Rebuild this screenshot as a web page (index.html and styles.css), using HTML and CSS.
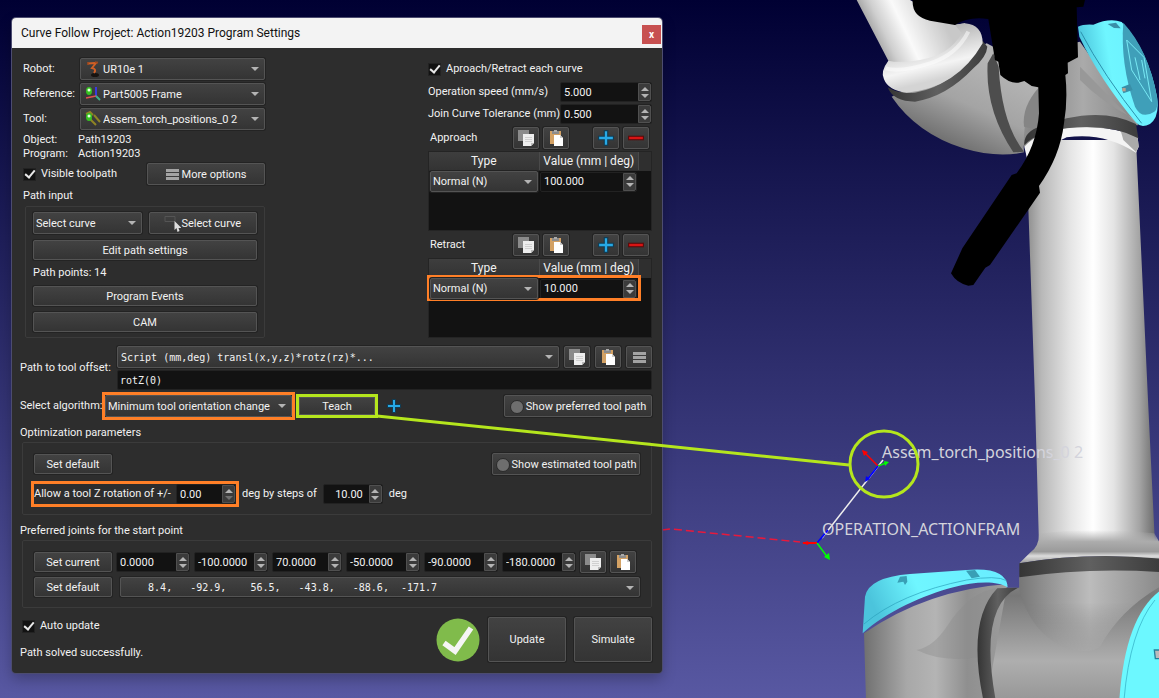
FILE: index.html
```
<!DOCTYPE html>
<html lang="en">
<head>
  <meta charset="UTF-8">
  <meta name="viewport" content="width=device-width, initial-scale=1.0">
  <title>Curve Follow Project</title>
  <link rel="stylesheet" href="styles.css">
</head>
<body>
  <!-- shared icons -->
  <svg class="defs" width="0" height="0" aria-hidden="true">
    <symbol id="i-copy" viewBox="0 0 16 16">
      <path d="M0 0h11v11H0z" fill="#8b8b8b"/>
      <path d="M5 4h11v9l-3 3H5z" fill="#eee"/>
      <path d="M7 7.5h7M7 9.5h7M7 11.5h7" stroke="#d0d0d0"/>
      <path d="M13 16v-3h3z" fill="#bbb"/>
    </symbol>
    <symbol id="i-paste" viewBox="0 0 16 16">
      <path d="M2 1h11v13H2z" fill="#d3a164"/>
      <path d="M4 1h7v3H4z" fill="#8c8c8c"/>
      <path d="M6 0h3v2H6z" fill="#aaa"/>
      <path d="M6 5h6l3 3v8H6z" fill="#fff"/>
      <path d="M12 5v3h3z" fill="#ccc"/>
    </symbol>
    <symbol id="i-plus" viewBox="0 0 14 14">
      <path d="M7 0v14M0 7h14" stroke="#123c52" stroke-width="4"/>
      <path d="M7 1v12M1 7h12" stroke="#27a9e6" stroke-width="2"/>
    </symbol>
    <symbol id="i-minus" viewBox="0 0 14 14">
      <path d="M0 7h14" stroke="#5a0d0d" stroke-width="4"/>
      <path d="M1 7h12" stroke="#d81414" stroke-width="2"/>
    </symbol>
    <symbol id="i-menu" viewBox="0 0 13 11">
      <path d="M0 1.5h13M0 5.5h13M0 9.5h13" stroke="#a3a3a3" stroke-width="3"/>
    </symbol>
  </svg>

  <!-- 3D view -->
  <svg class="scene" viewBox="0 0 1159 698" preserveAspectRatio="xMinYMin slice">
    <defs>
      <linearGradient id="column">
        <stop offset="0" stop-color="#8a8a8a"/>
        <stop offset=".12" stop-color="#b8b8b8"/>
        <stop offset=".35" stop-color="#e6e6e6"/>
        <stop offset=".52" stop-color="#fff"/>
        <stop offset=".68" stop-color="#e4e4e4"/>
        <stop offset=".88" stop-color="#a4a4a4"/>
        <stop offset="1" stop-color="#6c6c6c"/>
      </linearGradient>
      <linearGradient id="arm" gradientUnits="userSpaceOnUse" x1="80" y1="120" x2="290" y2="20">
        <stop offset="0" stop-color="#8c8c8c"/>
        <stop offset=".25" stop-color="#cfcfcf"/>
        <stop offset=".5" stop-color="#fafafa"/>
        <stop offset="1" stop-color="#c8c8c8"/>
      </linearGradient>
      <linearGradient id="flare" gradientUnits="userSpaceOnUse" x1="290" y1="60" x2="330" y2="230">
        <stop offset="0" stop-color="#a5a5a5"/>
        <stop offset=".4" stop-color="#cfcfcf"/>
        <stop offset=".75" stop-color="#f4f4f4"/>
        <stop offset="1" stop-color="#d4d4d4"/>
      </linearGradient>
      <linearGradient id="elbow" gradientUnits="userSpaceOnUse" x1="450" y1="180" x2="330" y2="450">
        <stop offset="0" stop-color="#b5b5b5"/>
        <stop offset=".5" stop-color="#a4a4a4"/>
        <stop offset="1" stop-color="#6a6a6a"/>
      </linearGradient>
      <linearGradient id="wrist" x1="0" y1="0" x2="1" y2="0">
        <stop offset="0" stop-color="#a8a8a8"/>
        <stop offset=".25" stop-color="#848484"/>
        <stop offset=".6" stop-color="#aaa"/>
        <stop offset="1" stop-color="#858585"/>
      </linearGradient>
      <linearGradient id="cap" x1="0" y1=".2" x2="1" y2="0">
        <stop offset="0" stop-color="#4bc4dc"/>
        <stop offset=".35" stop-color="#6ff6ff"/>
        <stop offset="1" stop-color="#68ecff"/>
      </linearGradient>
      <linearGradient id="ring">
        <stop offset="0" stop-color="#353535"/>
        <stop offset=".5" stop-color="#606060"/>
        <stop offset="1" stop-color="#3c3c3c"/>
      </linearGradient>
      <linearGradient id="collar" x1="0" y1="0" x2="0" y2="1">
        <stop offset="0" stop-color="#b4b4b4" stop-opacity="0"/>
        <stop offset=".35" stop-color="#acacac"/>
        <stop offset=".65" stop-color="#9a9a9a"/>
        <stop offset=".78" stop-color="#dcdcdc"/>
        <stop offset="1" stop-color="#999"/>
      </linearGradient>
      <linearGradient id="base" x1="0" y1="0" x2="0" y2="1">
        <stop offset="0" stop-color="#8c8c8c"/>
        <stop offset=".2" stop-color="#777"/>
        <stop offset=".7" stop-color="#aeaeae"/>
        <stop offset="1" stop-color="#979797"/>
      </linearGradient>
      <linearGradient id="neck">
        <stop offset="0" stop-color="#777"/>
        <stop offset=".5" stop-color="#bcbcbc"/>
        <stop offset="1" stop-color="#8a8a8a"/>
      </linearGradient>
      <linearGradient id="neck-fade" x1="0" y1="0" x2="0" y2="1">
        <stop offset=".4" stop-color="#fff"/>
        <stop offset="1" stop-color="#000"/>
      </linearGradient>
      <mask id="neck-mask">
        <path d="M658 500H1080V770H658Z" fill="url(#neck-fade)"/>
      </mask>
      <linearGradient id="shoulder">
        <stop offset="0" stop-color="#707070"/>
        <stop offset=".3" stop-color="#a8a8a8"/>
        <stop offset=".5" stop-color="#b4b4b4"/>
        <stop offset=".72" stop-color="#8f8f8f"/>
        <stop offset="1" stop-color="#9c9c9c"/>
      </linearGradient>
    </defs>

    <path d="M1026 140H1136L1148 400L1155 545H1039L1035 400Z" fill="url(#column)"/>

    <g transform="translate(840 0) scale(.33333)">
      <path d="M480 170L720 125L895 375L680 400L553 440L480 330Z" fill="url(#wrist)"/>
      <path d="M720 240Q790 310 880 355L895 378L720 200Z" fill="#989898"/>
      <path d="M155 290Q230 400 370 445Q470 475 552 457Q545 340 597 265L460 140L440 130Z" fill="url(#elbow)"/>
      <path d="M552 380Q545 320 597 262V390Z" fill="#858585"/>
      <path d="M443 190Q435 330 520 457L552 455Q485 370 476 200L460 160Z" fill="#4d4d4d"/>
      <path d="M143 262Q175 282 225 278Q350 255 428 122L442 140Q440 170 400 205Q320 290 225 305Q160 305 143 262Z" fill="url(#ring)"/>
      <path d="M50 0L145 182L180 240L380 140L375 70L345 74L210 0Z" fill="url(#arm)"/>
      <path d="M145 182Q120 215 132 238Q145 272 200 278Q350 265 428 130Q428 75 375 70L345 74L365 100Q330 165 240 180Q180 190 145 182Z" fill="url(#flare)"/>
      <path d="M137 205Q180 218 270 190Q350 165 385 95" fill="none" stroke="#fff" stroke-width="12" opacity=".5"/>
      <path d="M553 440Q600 388 690 383Q820 375 893 412L896 440L888 458Q790 395 680 412L560 470Z" fill="#f4f4f4"/>
      <path d="M840 385Q880 395 893 412L896 440L888 456L850 420Z" fill="#aaa"/>
      <path d="M553 436Q550 400 590 383L680 355Q800 328 888 372L895 415Q810 370 680 385Q590 395 553 436Z" fill="url(#ring)"/>
      <path d="M714 80Q730 72 760 74Q810 52 845 66Q925 150 951 290Q960 350 930 372Q905 385 890 370Q780 240 718 110Z" fill="url(#cap)"/>
      <path d="M850 68Q925 150 951 290Q956 325 943 335Q905 360 885 320Q840 190 850 68Z" fill="#3f9fb9"/>
      <path d="M722 95Q790 225 905 370" fill="none" stroke="#2b91ad" stroke-width="3"/>
      <path d="M860 120L875 210L935 305L912 172ZM885 172Q895 215 900 240M905 180L915 235" fill="none" stroke="#77e9f4" stroke-width="3"/>
      <path d="M803 72L828 68L842 85L822 84Z" fill="#398fa8"/>
      <path d="M845 262L870 252L878 270L850 280Z" fill="#398fa8"/>
      <path d="M847 264h10v10h-10z" fill="#b8a08e"/>
      <path d="M218 0Q215 50 270 62L345 75Q385 48 445 57L465 180L475 185L481 225Q510 252 535 248L553 243L575 258L595 262L597 340Q590 440 530 520L515 525L367 745L333 820Q350 850 385 857L400 855L436 803L450 795L600 578L597 558Q660 470 672 370Q684 300 676 225L684 220L683 188L714 172L710 22L730 20L735 0Z"/>
    </g>

    <g transform="translate(800 400) scale(.33333)">
      <path d="M717 400Q718 440 690 458L658 490Q860 455 1080 478V430L1063 400Q890 380 717 400Z" fill="url(#collar)"/>
      <path d="M658 530Q860 500 1080 512V900H560L590 563H658Z" fill="url(#base)"/>
      <path d="M658 530Q860 500 1080 512V560Q960 630 900 740Q860 770 780 735Q690 690 658 570Z" fill="url(#neck)" mask="url(#neck-mask)"/>
      <path d="M658 490Q860 455 1080 476V516Q860 502 658 532Z" fill="url(#ring)"/>
      <path d="M192 700Q380 570 622 552L560 900H198Z" fill="url(#shoulder)"/>
      <path d="M600 563Q510 570 440 680Q400 740 350 750Q430 790 540 770Z" fill="#8c8c8c" opacity=".4"/>
      <path d="M592 565L655 563Q535 620 587 900H550Q500 660 592 565Z" fill="url(#ring)"/>
      <path d="M188 700L195 590Q205 532 330 522L500 510Q620 500 623 562C590 540 520 545 460 562C370 585 260 635 188 700Z" fill="url(#cap)"/>
      <path d="M192 672Q300 580 500 540Q590 525 620 542" fill="none" stroke="#289eba" stroke-width="2"/>
      <path d="M292 548L300 530L320 528L322 545L315 555L310 545Z" fill="#399fb5"/>
      <path d="M498 512L525 510L540 530L515 535Z" fill="#399fb5"/>
      <path d="M1080 572Q975 650 958 900H1080Z" fill="#6cf8ff"/>
      <path d="M1065 600Q990 690 972 900" fill="none" stroke="#2fa8c0" stroke-width="2"/>
      <path d="M1063 750h17v26h-14z" fill="#bbb" stroke="#24809a" stroke-width="4"/>
    </g>

    <!-- tool path and frames -->
    <g fill="none">
      <path d="M662 530L671 529L800 542" stroke="#e8193c" stroke-width="1.5" stroke-dasharray="8 4"/>
      <path d="M883 460L822 538" stroke="#eee" stroke-width="1.5"/>
      <path d="M878 466L863 451" stroke="#f00" stroke-width="1.5"/>
      <path d="M878 466L886 463" stroke="#0e0" stroke-width="1.5"/>
      <path d="M878 466L867 480M817 543L828 530" stroke="#00f" stroke-width="1.8"/>
      <path d="M817 543H803" stroke="#f00" stroke-width="2"/>
      <path d="M817 543L828 558" stroke="#0f0" stroke-width="1.5"/>
    </g>
    <path d="M862 450l6 2-4 4zM802 543l6-2v4z" fill="#f00"/>
    <path d="M889 462l-5-1 1 5zM830 560l-1-7-5 4z" fill="#0f0"/>
    <path d="M865 482l1-6 4 3z" fill="#00f"/>
    <text x="882" y="458" class="scene-label">Assem_torch_positions_0 2</text>
    <text x="822" y="535" class="scene-label">OPERATION_ACTIONFRAM</text>
  </svg>

  <main class="dialog">
    <header class="titlebar">
      <h1>Curve Follow Project: Action19203 Program Settings</h1>
      <button class="close" aria-label="Close">x</button>
    </header>

    <div class="content">
      <div class="top">
        <section class="left">
          <div class="fields">
            <label for="robot">Robot:</label>
            <div class="combo">
              <svg class="combo-icon" viewBox="0 0 16 16">
                <ellipse cx="10" cy="14" rx="4" ry="2" fill="#171310"/>
                <path d="M3 2.5L11 2L7 7Q12 8 9 12" fill="none" stroke="#cf5f25" stroke-width="2"/>
                <path d="M3 4V1M10 1l3 1" fill="none" stroke="#a44a1d" stroke-width="1.5"/>
              </svg>
              <select id="robot" class="has-icon"><option>UR10e 1</option></select>
            </div>
            <label for="reference">Reference:</label>
            <div class="combo">
              <svg class="combo-icon" viewBox="0 0 16 16">
                <path d="M11 1V11" stroke="#3a3ae0" stroke-width="2"/>
                <path d="M11 10L1 12" stroke="#e05050" stroke-width="1.5"/>
                <path d="M11 10L15 14" stroke="#3fae8a" stroke-width="2"/>
                <ellipse cx="4" cy="5" rx="3" ry="4" fill="#36c321"/>
                <circle cx="4" cy="4" r="1.5" fill="#e9ffe4"/>
              </svg>
              <select id="reference" class="has-icon"><option>Part5005 Frame</option></select>
            </div>
            <label for="tool">Tool:</label>
            <div class="combo">
              <svg class="combo-icon" viewBox="0 0 16 16">
                <path d="M1 3L5 1L8 4M9 4L15 11M5 8L11 14" fill="none" stroke="#8f8424" stroke-width="2"/>
                <ellipse cx="4" cy="6" rx="3" ry="4" fill="#36c321"/>
                <circle cx="4" cy="5" r="1.5" fill="#e9ffe4"/>
              </svg>
              <select id="tool" class="has-icon"><option>Assem_torch_positions_0 2</option></select>
            </div>
          </div>
          <dl class="info">
            <dt>Object:</dt><dd>Path19203</dd>
            <dt>Program:</dt><dd>Action19203</dd>
          </dl>
          <div class="row between">
            <label class="check"><input type="checkbox" checked>Visible toolpath</label>
            <button class="btn more"><svg class="menu-icon"><use href="#i-menu"/></svg>More options</button>
          </div>
          <h2>Path input</h2>
          <div class="group path-input">
            <div class="pickers">
              <div class="combo">
                <select aria-label="Path type"><option>Select curve</option></select>
              </div>
              <button class="btn pick">
                <svg class="cursor-icon" viewBox="0 0 16 16">
                  <path d="M.5.5h10v5H.5z" fill="none" stroke="#555"/>
                  <path d="M10 5v9l2-2 1 4 2-1-1-3h3z" fill="#ddd"/>
                </svg>Select curve
              </button>
            </div>
            <button class="btn">Edit path settings</button>
            <p>Path points: 14</p>
            <button class="btn">Program Events</button>
            <button class="btn">CAM</button>
          </div>
        </section>

        <section class="right">
          <label class="check tall"><input type="checkbox" checked>Aproach/Retract each curve</label>
          <div class="row between">
            <label for="speed">Operation speed (mm/s)</label>
            <div class="spin wide"><input id="speed" type="text" value="5.000"><span class="arrows"></span></div>
          </div>
          <div class="row between">
            <label for="tolerance">Join Curve Tolerance (mm)</label>
            <div class="spin wide"><input id="tolerance" type="text" value="0.500"><span class="arrows"></span></div>
          </div>

          <div class="row tools">
            <h2>Approach</h2>
            <button class="btn icon" aria-label="Copy"><svg><use href="#i-copy"/></svg></button>
            <button class="btn icon" aria-label="Paste"><svg><use href="#i-paste"/></svg></button>
            <button class="btn icon add" aria-label="Add"><svg><use href="#i-plus"/></svg></button>
            <button class="btn icon" aria-label="Remove"><svg><use href="#i-minus"/></svg></button>
          </div>
          <div class="table-box">
            <table>
              <thead><tr><th>Type</th><th>Value (mm | deg)</th></tr></thead>
              <tbody>
                <tr>
                  <td><div class="combo"><select aria-label="Approach type"><option>Normal (N)</option></select></div></td>
                  <td><div class="spin"><input type="text" value="100.000" aria-label="Approach value"><span class="arrows"></span></div></td>
                </tr>
              </tbody>
            </table>
          </div>

          <div class="row tools">
            <h2>Retract</h2>
            <button class="btn icon" aria-label="Copy"><svg><use href="#i-copy"/></svg></button>
            <button class="btn icon" aria-label="Paste"><svg><use href="#i-paste"/></svg></button>
            <button class="btn icon add" aria-label="Add"><svg><use href="#i-plus"/></svg></button>
            <button class="btn icon" aria-label="Remove"><svg><use href="#i-minus"/></svg></button>
          </div>
          <div class="table-box">
            <table>
              <thead><tr><th>Type</th><th>Value (mm | deg)</th></tr></thead>
              <tbody>
                <tr class="mark">
                  <td><div class="combo"><select aria-label="Retract type"><option>Normal (N)</option></select></div></td>
                  <td><div class="spin"><input type="text" value="10.000" aria-label="Retract value"><span class="arrows"></span></div></td>
                </tr>
              </tbody>
            </table>
          </div>
        </section>
      </div>

      <section class="offset">
        <label for="offset">Path to tool offset:</label>
        <div class="row">
          <div class="combo grow">
            <select class="mono" aria-label="Offset format"><option>Script (mm,deg) transl(x,y,z)*rotz(rz)*...</option></select>
          </div>
          <button class="btn icon" aria-label="Copy"><svg><use href="#i-copy"/></svg></button>
          <button class="btn icon" aria-label="Paste"><svg><use href="#i-paste"/></svg></button>
          <button class="btn icon" aria-label="Menu"><svg class="menu-icon"><use href="#i-menu"/></svg></button>
        </div>
        <input id="offset" class="mono text-input" type="text" value="rotZ(0)">
      </section>

      <section class="row algorithm">
        <label for="algorithm">Select algorithm:</label>
        <div class="combo mark">
          <select id="algorithm"><option>Minimum tool orientation change</option></select>
        </div>
        <button class="btn teach">Teach</button>
        <button class="plain" aria-label="Add"><svg><use href="#i-plus"/></svg></button>
        <button class="btn toggle"><span class="lamp"></span>Show preferred tool path</button>
      </section>

      <h2 class="section-title">Optimization parameters</h2>
      <section class="group optimize">
        <div class="row between">
          <button class="btn fixed">Set default</button>
          <button class="btn toggle"><span class="lamp"></span>Show estimated tool path</button>
        </div>
        <div class="row rotation">
          <div class="row mark limit">
            <label for="rotation">Allow a tool Z rotation of +/-</label>
            <div class="spin small dim"><input id="rotation" type="text" value="0.00"><span class="arrows"></span></div>
          </div>
          <label for="steps">deg by steps of</label>
          <div class="spin small end"><input id="steps" type="text" value="10.00"><span class="arrows"></span></div>
          <span>deg</span>
        </div>
      </section>

      <h2 class="section-title">Preferred joints for the start point</h2>
      <section class="group joints">
        <div class="row">
          <button class="btn fixed">Set current</button>
          <div class="spin"><input type="text" value="0.0000" aria-label="Joint 1"><span class="arrows"></span></div>
          <div class="spin"><input type="text" value="-100.0000" aria-label="Joint 2"><span class="arrows"></span></div>
          <div class="spin short"><input type="text" value="70.0000" aria-label="Joint 3"><span class="arrows"></span></div>
          <div class="spin"><input type="text" value="-50.0000" aria-label="Joint 4"><span class="arrows"></span></div>
          <div class="spin"><input type="text" value="-90.0000" aria-label="Joint 5"><span class="arrows"></span></div>
          <div class="spin"><input type="text" value="-180.0000" aria-label="Joint 6"><span class="arrows"></span></div>
          <button class="btn icon" aria-label="Copy"><svg><use href="#i-copy"/></svg></button>
          <button class="btn icon" aria-label="Paste"><svg><use href="#i-paste"/></svg></button>
        </div>
        <div class="row solutions">
          <button class="btn fixed">Set default</button>
          <div class="combo grow">
            <select class="mono" aria-label="Joint solution"><option>&nbsp;&nbsp;&nbsp;&nbsp;8.4,&nbsp;&nbsp;&nbsp;-92.9,&nbsp;&nbsp;&nbsp;&nbsp;56.5,&nbsp;&nbsp;&nbsp;-43.8,&nbsp;&nbsp;&nbsp;-88.6,&nbsp;&nbsp;-171.7</option></select>
          </div>
        </div>
      </section>

      <footer class="row footer">
        <div class="status">
          <label class="check"><input type="checkbox" checked>Auto update</label>
          <p>Path solved successfully.</p>
        </div>
        <svg class="ok" viewBox="0 0 44 44">
          <circle cx="22" cy="22" r="21.5" fill="#80bb4b"/>
          <path d="M8 25L19 33L35 10" fill="none" stroke="#f5f5f5" stroke-width="5.5"/>
        </svg>
        <button class="btn big">Update</button>
        <button class="btn big">Simulate</button>
      </footer>
    </div>
  </main>

  <!-- callout from Teach to the target -->
  <svg class="scene callout" viewBox="0 0 1159 698" preserveAspectRatio="xMinYMin slice">
    <path d="M377 416L849 465" />
    <ellipse cx="884" cy="464" rx="34" ry="33"/>
  </svg>
</body>
</html>
```
FILE: styles.css
```
* {
  box-sizing: border-box;
}

body {
  margin: 0;
  padding: 18px 12px;
  min-height: 100vh;
  background: linear-gradient(to bottom, #000033, #5858a2);
  color: #f2f2f2;
  font-family: Roboto, sans-serif;
  font-size: 11px;
  line-height: 14px;
  overflow: hidden;
}

h1, h2, p, dl, dd {
  margin: 0;
  font-size: 11px;
  font-weight: normal;
}

button, input, select {
  font: inherit;
  color: inherit;
  margin: 0;
}

label, h2, button {
  white-space: nowrap;
}

.defs {
  position: absolute;
}

.scene {
  position: absolute;
  top: 0;
  left: 0;
  width: 100vw;
  height: 100vh;
}

.scene-label {
  font-family: "Noto Sans", sans-serif;
  font-size: 16px;
  fill: #d4d4dc;
}

.callout {
  pointer-events: none;
  fill: none;
  stroke: #b5e61d;
  stroke-width: 3;
}

/* dialog */
.dialog {
  position: relative;
  max-width: 650px;
  background: #2d2d2d;
  border-radius: 4px;
  box-shadow: 0 0 0 1px #4c4c70, 0 6px 14px rgba(0, 0, 0, 0.25);
}

.titlebar {
  display: flex;
  align-items: center;
  justify-content: space-between;
  height: 30px;
  padding: 0 1px 0 9px;
  background: #f3f3f3;
  color: #111;
  border-radius: 4px 4px 0 0;
}

.titlebar h1 {
  font-size: 12px;
}

.close {
  width: 19px;
  height: 19px;
  margin-top: 3px;
  padding: 0;
  border: none;
  background: #c75050;
  color: #fff;
  font-size: 10px;
  font-weight: bold;
  line-height: 16px;
}

.content {
  padding: 10px 10px 11px 8px;
}

.row {
  display: flex;
  align-items: center;
}

.between {
  justify-content: space-between;
}

.grow {
  flex: 1;
}

/* controls */
.btn {
  display: flex;
  align-items: center;
  justify-content: center;
  height: 20px;
  padding: 1px 4px 0;
  border: 1px solid #545454;
  border-radius: 2px;
  background: linear-gradient(#424242, #343434);
  box-shadow: 0 0 0 1px #232323;
}

.btn.icon {
  width: 26px;
  height: 22px;
  padding: 0;
}

.btn.icon svg {
  width: 16px;
  height: 16px;
}

.btn .menu-icon, .btn.icon .menu-icon {
  width: 13px;
  height: 11px;
}

.btn.fixed {
  width: 78px;
}

.btn.toggle {
  height: 22px;
  width: 148px;
}

.btn.big {
  width: 78px;
  height: 45px;
}

.lamp {
  width: 14px;
  height: 14px;
  margin-right: 2px;
  border: 1px solid #2a2a2a;
  border-radius: 50%;
  background: #6e6e6e;
  flex: none;
}

.plain {
  padding: 0;
  border: none;
  background: none;
  height: 14px;
}

.plain svg {
  width: 14px;
  height: 14px;
}

.combo {
  position: relative;
  height: 22px;
}

.combo select {
  appearance: none;
  display: block;
  width: 100%;
  height: 100%;
  padding: 1px 16px 0 2px;
  border: 1px solid #545454;
  border-radius: 2px;
  background: linear-gradient(#424242, #343434);
  box-shadow: 0 0 0 1px #232323;
}

.combo select.has-icon {
  padding-left: 22px;
}

.combo select.mono {
  padding-left: 3px;
}

.combo-icon {
  position: absolute;
  left: 5px;
  top: 3px;
  width: 16px;
  height: 16px;
}

.combo::after {
  content: "";
  position: absolute;
  right: 6px;
  top: 9px;
  border: 4px solid transparent;
  border-top-color: #b4b4b4;
  border-bottom: none;
  pointer-events: none;
}

.spin {
  display: flex;
  flex: none;
  width: 74px;
  height: 20px;
  background: #121212;
  border: 1px solid #222;
  border-radius: 2px;
}

.spin input {
  flex: 1;
  min-width: 0;
  padding: 1px 0 0 3px;
  border: none;
  background: none;
}

.arrows {
  display: flex;
  flex-direction: column;
  justify-content: center;
  align-items: center;
  gap: 3px;
  width: 13px;
  border: 1px solid #505050;
  border-radius: 0 2px 2px 0;
  background: #3b3b3b;
}

.arrows::before, .arrows::after {
  content: "";
  border: 4px solid transparent;
}

.arrows::before {
  border-bottom-color: #b4b4b4;
  border-top: none;
}

.arrows::after {
  border-top-color: #b4b4b4;
  border-bottom: none;
}

.spin.wide {
  width: 92px;
}

.spin.small {
  width: 60px;
}

.spin.short {
  width: 70px;
}

.spin.end input {
  padding-right: 6px;
  text-align: right;
}

.spin.dim .arrows::after {
  border-top-color: #707070;
}

.check {
  display: flex;
  align-items: center;
  gap: 5px;
}

.check input {
  appearance: none;
  display: flex;
  align-items: center;
  justify-content: center;
  width: 13px;
  height: 13px;
  background: #121212;
  border: 1px solid #222;
}

.check input:checked::before {
  content: "";
  width: 4px;
  height: 8px;
  margin-bottom: 2px;
  border: solid #e8e8e8;
  border-width: 0 2px 2px 0;
  transform: rotate(40deg);
}

.check.tall {
  height: 22px;
}

.mono {
  font-family: "DejaVu Sans Mono", monospace;
  font-size: 10px;
}

.group {
  margin-left: 2px;
  border: 1px solid #3b3b3b;
  border-radius: 2px;
}

.mark {
  outline: 3px solid #ff7f27;
}

/* top half */
.top {
  display: flex;
  justify-content: space-between;
}

.left {
  width: 245px;
  padding-left: 3px;
}

.fields {
  display: grid;
  grid-template-columns: 57px 1fr;
  align-items: center;
  gap: 3px 0;
}

.info {
  display: grid;
  grid-template-columns: 55px 1fr;
  margin: 3px 0 2px;
}

.more {
  width: 118px;
  height: 22px;
  gap: 3px;
}

.left h2 {
  margin: 4px 0 3px;
}

.path-input {
  display: flex;
  flex-direction: column;
  gap: 6px;
  padding: 5px 7px;
}

.pickers {
  display: grid;
  grid-template-columns: repeat(2, minmax(0, 1fr));
  gap: 7px;
}

.pick {
  height: 22px;
}

.cursor-icon {
  width: 17px;
  height: 16px;
}

.right {
  display: flex;
  flex-direction: column;
  gap: 2px;
  width: 224px;
}

.tools {
  gap: 4px;
  padding: 1px 3px 0 2px;
}

.tools h2 {
  flex: 1;
}

.tools .add {
  margin-left: 20px;
}

.table-box {
  height: 80px;
  background: linear-gradient(#2f2f2f 19px, #121212 19px);
  border: 1px solid #242424;
}

table {
  width: 210px;
  border-collapse: collapse;
  table-layout: fixed;
}

th {
  height: 18px;
  padding: 0;
  border-right: 1px solid #4a4a4a;
  background: linear-gradient(#3e3e3e, #333);
  font-size: 12px;
  font-weight: normal;
  line-height: 18px;
  white-space: nowrap;
}

th:first-child {
  width: 110px;
}

td {
  padding: 1px 1px 0;
}

td .combo {
  height: 21px;
}

td .spin {
  width: 97px;
}

tr.mark {
  outline-offset: -1px;
}

/* tool offset and algorithm */
.offset {
  display: grid;
  grid-template-columns: 97px 1fr;
  align-items: center;
  row-gap: 2px;
  margin-top: 8px;
}

.offset label {
  grid-row: span 2;
}

.offset .row {
  gap: 5px;
}

.text-input {
  height: 20px;
  padding: 0 2px;
  border: 1px solid #222;
  border-radius: 2px;
  background: #121212;
}

.algorithm {
  margin-top: 5px;
  height: 22px;
}

.algorithm label {
  width: 85px;
}

.algorithm .combo {
  width: 187px;
}

.teach {
  width: 76px;
  height: 18px;
  margin: 0 12px 0 7px;
  border-radius: 0;
  outline: 3px solid #b5e61d;
}

.algorithm .toggle {
  margin-left: auto;
}

.section-title {
  margin: 9px 0 2px;
}

.optimize {
  padding: 10px 11px;
}

.rotation {
  gap: 6px;
  margin-top: 9px;
}

.limit {
  justify-content: space-between;
  width: 202px;
}

.joints {
  padding: 10px 11px;
}

.joints .row {
  gap: 4px;
}

.joints .solutions {
  gap: 8px;
  margin-top: 4px;
}

.solutions .combo {
  height: 20px;
}

.footer {
  gap: 8px;
  margin-top: 9px;
}

.status {
  display: flex;
  flex-direction: column;
  gap: 13px;
  flex: 1;
}

.status .check {
  padding-left: 2px;
}

.ok {
  width: 44px;
  height: 44px;
}
```
